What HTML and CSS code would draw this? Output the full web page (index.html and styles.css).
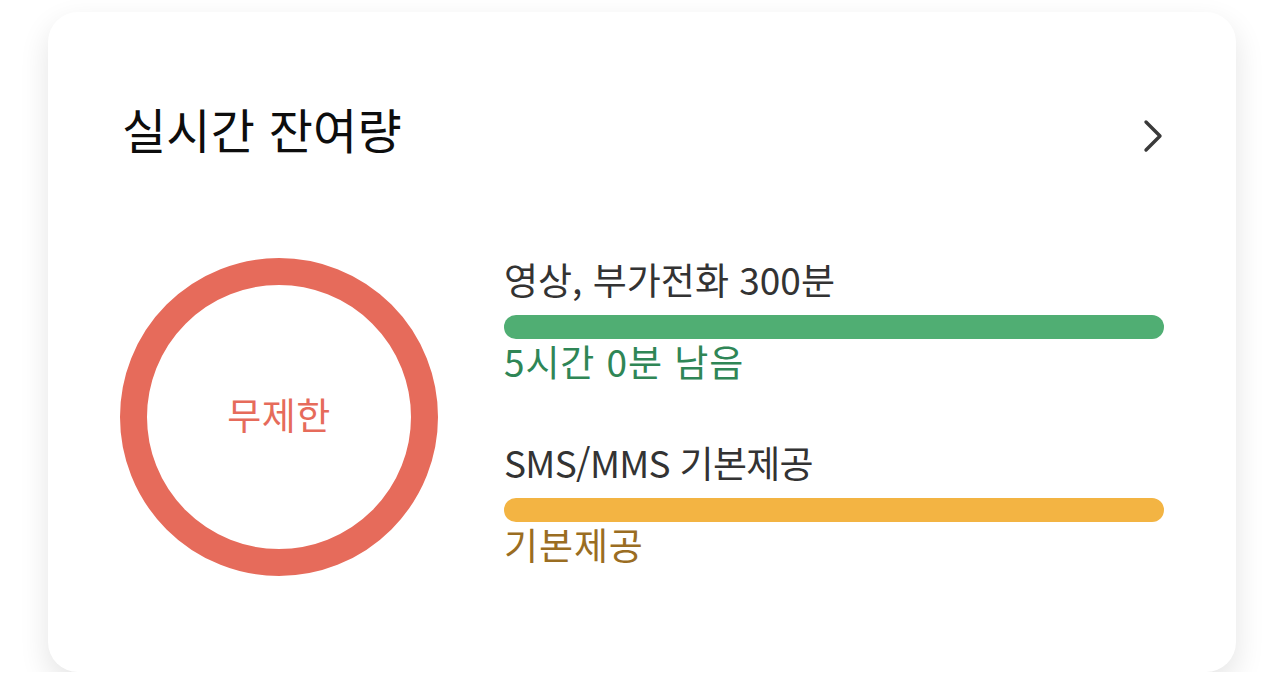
FILE: index.html
```html
<!DOCTYPE html>
<html lang="ko">
<head>
<meta charset="utf-8">
<title>실시간 잔여량</title>
<link rel="stylesheet" href="styles.css">
</head>
<body>
<div class="card">
  <div class="header">
    <h2 class="title">실시간 잔여량</h2>
    <svg class="chev" width="20" height="34" viewBox="0 0 20 34" aria-hidden="true">
      <path d="M3 3 L17 17 L3 31" fill="none" stroke="#3a3a3a" stroke-width="3.4" stroke-linecap="round" stroke-linejoin="round"/>
    </svg>
  </div>
  <div class="body">
    <div class="ring"><span>무제한</span></div>
    <div class="items">
      <div class="item">
        <div class="label">영상, 부가전화 300분</div>
        <div class="bar green"></div>
        <div class="sub green-t sub-wide">5시간 0분 남음</div>
      </div>
      <div class="item">
        <div class="label label-tight">SMS/MMS 기본제공</div>
        <div class="bar yellow"></div>
        <div class="sub brown-t sub-wide">기본제공</div>
      </div>
    </div>
  </div>
</div>
</body>
</html>
```

FILE: styles.css
```css
html, body {
  margin: 0;
  padding: 0;
  background: #ffffff;
}
body {
  font-family: "Noto Sans CJK KR", "Noto Sans", sans-serif;
  padding: 12px 48px 0 48px;
}
.card {
  box-sizing: border-box;
  width: 1188px;
  height: 660px;
  background: #fff;
  border-radius: 30px;
  box-shadow: 0 12px 30px rgba(0, 0, 0, 0.11);
  padding: 86px 72px 0 74px;
}
.header {
  display: flex;
  justify-content: space-between;
  align-items: center;
  height: 60px;
}
.title {
  margin: 0;
  font-size: 48px;
  font-weight: 400;
  color: #0d0d0d;
  letter-spacing: 0.2px;
  line-height: 60px;
}
.chev {
  margin-right: 1px;
  margin-top: 16px;
}
.body {
  display: flex;
  align-items: center;
  margin-top: 100px;
  margin-left: -2px;
}
.ring {
  box-sizing: border-box;
  width: 318px;
  height: 318px;
  border-radius: 50%;
  border: 27px solid #e66b5b;
  display: flex;
  align-items: center;
  justify-content: center;
  flex-shrink: 0;
}
.ring span {
  color: #e66b5b;
  font-size: 37px;
  letter-spacing: 0.5px;
  margin-top: -6px;
}
.items {
  flex: 1;
  margin-left: 66px;
  display: flex;
  flex-direction: column;
  gap: 57px;
  margin-top: -11px;
}
.label {
  font-size: 37px;
  color: #333;
  letter-spacing: 0;
  line-height: 44px;
}
.label-tight {
  letter-spacing: -0.7px;
}
.bar {
  height: 24px;
  border-radius: 12px;
  margin-top: 14px;
}
.green { background: #50ae73; }
.yellow { background: #f3b443; }
.sub {
  font-size: 37px;
  letter-spacing: -0.3px;
  line-height: 44px;
}
.sub-wide {
  letter-spacing: 0.9px;
}
.green-t { color: #2f8656; }
.brown-t { color: #9a6d22; }
```
